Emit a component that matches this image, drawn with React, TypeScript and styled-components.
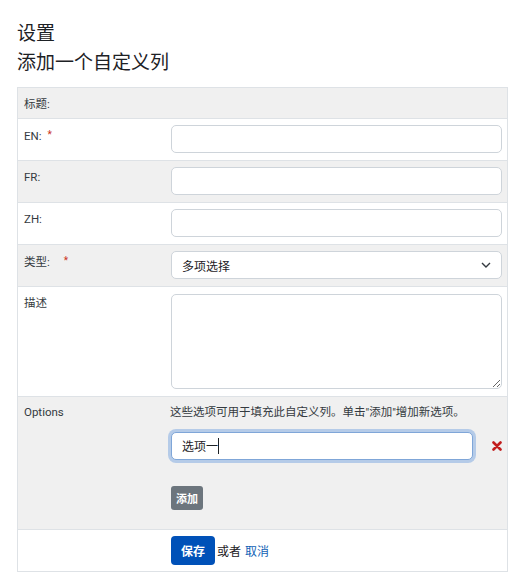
import { createGlobalStyle, styled } from "styled-components";

const GlobalStyle = createGlobalStyle`
  body {
    margin: 8px;
    background: #fff;
    font-family: Roboto, "Noto Sans CJK SC", sans-serif;
    color: #1d2125;
  }
`;

const Page = styled.div`
  padding: 0 9px;
`;

const Heading = styled.h2`
  margin: 11px 0 0;
  font-size: 19px;
  font-weight: 400;
  line-height: 29px;
  color: #1d2125;
`;

const SubHeading = styled(Heading)`
  margin: 0 0 10px;
`;

//  Form table
const Table = styled.div`
  border: 1px solid #dee2e6;
`;

const Row = styled.div<{ $shaded?: boolean }>`
  display: grid;
  grid-template-columns: 147px 1fr;
  background: ${(p) => (p.$shaded ? "#f0f0f0" : "#fff")};
  & + & {
    border-top: 1px solid #dee2e6;
  }
`;

const Label = styled.div<{ $pad?: number }>`
  padding: ${(p) => p.$pad ?? 8}px 6px 6px;
  font-size: 11.5px;
  line-height: 16px;
  color: #343a40;
`;

const Required = styled.span<{ $gap?: number }>`
  color: #ca3120;
  font-size: 10px;
  margin-left: ${(p) => p.$gap ?? 6}px;
  vertical-align: 2px;
`;

const Cell = styled.div<{ $top?: number; $bottom?: number }>`
  padding: ${(p) => p.$top ?? 6}px 5px ${(p) => p.$bottom ?? 7}px 6px;
  min-height: 16px;
`;

const TextInput = styled.input`
  box-sizing: border-box;
  display: block;
  width: 100%;
  height: 28px;
  padding: 0 10px;
  border: 1px solid #ced4da;
  border-radius: 5px;
  background: #fff;
  font-family: Roboto, "Noto Sans CJK SC", sans-serif;
  font-size: 12px;
  color: #1d2125;
  outline: none;
`;

const FocusInput = styled(TextInput)`
  border-color: #7fa6d8;
  box-shadow: 0 0 0 3px #b5cbe8;
`;

const SelectBox = styled.div`
  box-sizing: border-box;
  display: flex;
  align-items: center;
  justify-content: space-between;
  height: 28px;
  padding: 0 10px;
  border: 1px solid #ced4da;
  border-radius: 5px;
  background: #fff;
  font-size: 12px;
  color: #1d2125;
`;

const TextArea = styled.textarea`
  box-sizing: border-box;
  display: block;
  width: 100%;
  height: 95px;
  border: 1px solid #ced4da;
  border-radius: 5px;
  resize: vertical;
  font-family: inherit;
`;

const Help = styled.div`
  font-size: 11.5px;
  line-height: 16px;
  color: #343a40;
  margin: 1px 0 12px -1px;
`;

const OptionLine = styled.div`
  display: grid;
  grid-template-columns: 302px 1fr;
  align-items: center;
`;

const Remove = styled.span`
  display: flex;
  justify-content: flex-end;
`;

const Typed = styled.div`
  position: relative;
`;

// typed value with caret, laid over the focused input
const TypedText = styled.span`
  position: absolute;
  left: 11px;
  top: 6px;
  font-size: 12px;
  line-height: 16px;
  color: #1d2125;
  pointer-events: none;
`;

const Caret = styled.span`
  display: inline-block;
  width: 1px;
  height: 16px;
  background: #1d2125;
  vertical-align: -3px;
`;

const SmallButton = styled.button`
  margin-top: 26px;
  padding: 0 5px;
  height: 24px;
  border: 0;
  border-radius: 3px;
  background: #6c757d;
  color: #fff;
  font-family: inherit;
  font-size: 11px;
  font-weight: 700;
`;

const Actions = styled.div`
  display: flex;
  align-items: center;
  gap: 2px;
  font-size: 12px;
  color: #1d2125;
`;

const SaveButton = styled.button`
  height: 29px;
  padding: 0 10px;
  border: 0;
  border-radius: 4px;
  background: #0051b8;
  color: #fff;
  font-family: inherit;
  font-size: 12px;
  font-weight: 700;
`;

const Link = styled.a`
  color: #0f5fb5;
  text-decoration: none;
  margin-left: 2px;
`;

function Chevron() {
  return (
    <svg width="10" height="6" viewBox="0 0 10 6">
      <path d="M1 1l4 4 4-4" fill="none" stroke="#343a40" strokeWidth="1.4" />
    </svg>
  );
}

function RemoveIcon() {
  return (
    <svg width="10" height="10" viewBox="0 0 10 10">
      <path d="M1.5 1.5l7 7M8.5 1.5l-7 7" stroke="#c21d1d" strokeWidth="2.6" strokeLinecap="round" />
    </svg>
  );
}

function App() {
  return (
    <Page>
      <GlobalStyle />
      <Heading>设置</Heading>
      <SubHeading>添加一个自定义列</SubHeading>
      <Table>
        <Row $shaded>
          <Label>标题:</Label>
          <Cell />
        </Row>
        <Row>
          <Label>
            EN:<Required>*</Required>
          </Label>
          <Cell>
            <TextInput />
          </Cell>
        </Row>
        <Row $shaded>
          <Label>FR:</Label>
          <Cell>
            <TextInput />
          </Cell>
        </Row>
        <Row>
          <Label>ZH:</Label>
          <Cell>
            <TextInput />
          </Cell>
        </Row>
        <Row $shaded>
          <Label>
            类型:<Required $gap={14}>*</Required>
          </Label>
          <Cell>
            <SelectBox>
              多项选择
              <Chevron />
            </SelectBox>
          </Cell>
        </Row>
        <Row>
          <Label>描述</Label>
          <Cell $top={7}>
            <TextArea />
          </Cell>
        </Row>
        <Row $shaded>
          <Label $pad={7}>Options</Label>
          <Cell $top={6} $bottom={19}>
            <Help>这些选项可用于填充此自定义列。单击"添加"增加新选项。</Help>
            <OptionLine>
              <Typed>
                <FocusInput />
                <TypedText>
                  选项一<Caret />
                </TypedText>
              </Typed>
              <Remove>
                <RemoveIcon />
              </Remove>
            </OptionLine>
            <SmallButton>添加</SmallButton>
          </Cell>
        </Row>
        <Row>
          <Label />
          <Cell $top={6} $bottom={6}>
            <Actions>
              <SaveButton>保存</SaveButton>
              或者<Link href="#">取消</Link>
            </Actions>
          </Cell>
        </Row>
      </Table>
    </Page>
  );
}

export default App;
